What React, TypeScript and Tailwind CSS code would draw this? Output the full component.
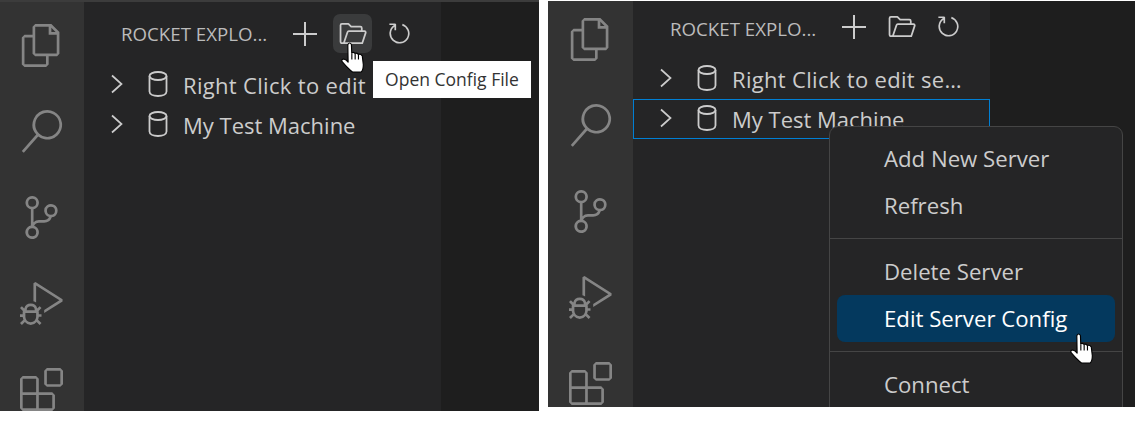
import React from 'react';

const BarIcon = ({ d }: { d: string }) => (
  <svg className="shrink-0" width="43" height="43" viewBox="0 0 24 24" fill="#858585" fillRule="evenodd">
    <path d={d} />
  </svg>
);

const FILES = 'M17.5 0h-9L7 1.5V6H2.5L1 7.5v15.07L2.5 24h12.07L16 22.57V18h4.7l1.3-1.43V4.5L17.5 0zm0 2.12l2.38 2.38H17.5V2.12zm-3 20.38h-12v-15H7v9.07L8.5 18h6v4.5zm6-6h-12v-15H16V6h4.5v10.5z';
const SEARCH = 'M15.25 0a8.25 8.25 0 0 0-6.18 13.72L1 22.88l1.12 1 8.05-9.12A8.251 8.251 0 1 0 15.25.01V0zm0 15a6.75 6.75 0 1 1 0-13.5 6.75 6.75 0 0 1 0 13.5z';
const BRANCH = 'M21.007 8.222A3.738 3.738 0 0 0 15.045 5.2a3.737 3.737 0 0 0 1.156 6.583 2.988 2.988 0 0 1-2.668 1.67h-2.99a4.456 4.456 0 0 0-2.989 1.165V7.4a3.737 3.737 0 1 0-1.494 0v9.117a3.776 3.776 0 1 0 1.816.099 2.99 2.99 0 0 1 2.668-1.667h2.99a4.484 4.484 0 0 0 4.223-3.039 3.736 3.736 0 0 0 3.25-3.687zM4.565 3.738a2.242 2.242 0 1 1 4.484 0 2.242 2.242 0 0 1-4.484 0zm4.484 16.441a2.242 2.242 0 1 1-4.484 0 2.242 2.242 0 0 1 4.484 0zm8.221-9.715a2.242 2.242 0 1 1 0-4.485 2.242 2.242 0 0 1 0 4.485z';
const DEBUG = 'M10.94 13.5l-1.32 1.32a3.73 3.73 0 0 0-7.24 0L1.06 13.5 0 14.56l1.72 1.72-.22.22V18H0v1.5h1.5v.08c.077.489.214.966.41 1.42L0 22.94 1.06 24l1.65-1.65A4.308 4.308 0 0 0 6 24a4.31 4.31 0 0 0 3.29-1.65L10.94 24 12 22.94 10.09 21c.198-.464.336-.951.41-1.45v-.1H12V18h-1.5v-1.5l-.22-.22L12 14.56l-1.06-1.06zM6 13.5a2.25 2.25 0 0 1 2.25 2.25h-4.5A2.25 2.25 0 0 1 6 13.5zm3 6a3.33 3.33 0 0 1-3 3 3.33 3.33 0 0 1-3-3v-2.25h6v2.25zm14.76-9.9v1.26L13.5 17.37V15.6l8.5-5.37L9 2v9.46a5.07 5.07 0 0 0-1.5-.72V.63L8.64 0l15.12 9.6z';
const EXTENSIONS = 'M13.5 1.5L15 0h7.5L24 1.5V9l-1.5 1.5H15L13.5 9V1.5zm1.5 0V9h7.5V1.5H15zM0 15V6l1.5-1.5H9L10.5 6v7.5H18l1.5 1.5v7.5L18 24H1.5L0 22.5V15zm9-1.5V6H1.5v7.5H9zM9 15H1.5v7.5H9V15zm1.5 7.5H18V15h-7.5v7.5z';

const Chevron = () => (
  <svg className="mb-[2px] shrink-0" width="14" height="20" viewBox="0 0 14 20" fill="none" stroke="#cccccc" strokeWidth="1.7">
    <path d="M2 1.500l9.500 8.500L2 18.500" />
  </svg>
);

const DbIcon = () => (
  <svg className="mb-[3px] ml-[23px] shrink-0" width="22" height="28" viewBox="0 0 22 28" fill="none" stroke="#cccccc" strokeWidth="1.800">
    <ellipse cx="11" cy="6" rx="8.500" ry="4" />
    <path d="M2.500 6v15.500c0 2.600 3.500 4.500 8.500 4.500s8.500-1.900 8.500-4.500V6" />
  </svg>
);

const PlusIcon = () => (
  <svg width="28" height="28" viewBox="0 0 28 28" fill="none" stroke="#cccccc" strokeWidth="2">
    <path d="M14 2v24M2 14h24" />
  </svg>
);

const FolderIcon = () => (
  <svg width="28" height="24" viewBox="0 0 30 26" fill="none" stroke="#cccccc" strokeWidth="1.900" strokeLinejoin="round">
    <path d="M5 23H3a1.500 1.500 0 0 1-1.500-1.500v-18A1.500 1.500 0 0 1 3 2h7l3 3h10a1.500 1.500 0 0 1 1.500 1.500V10" />
    <path d="M5 23l4-12a1.500 1.500 0 0 1 1.500-1h17c1 0 1.500 .8 1.200 1.800L25 23z" />
  </svg>
);

const RefreshIcon = () => (
  <svg width="27" height="27" viewBox="0 0 16 16" fill="#cccccc" fillRule="evenodd">
    <path d="M4.681 3H2V2h3.500l.5.5V6H5V4a5 5 0 1 0 4.530-.761l.302-.954A6 6 0 1 1 4.681 3z" />
  </svg>
);

const HandCursor = () => (
  <svg width="25" height="31" viewBox="0 0 24 30" fill="#ffffff" stroke="#000000" strokeWidth="1.100" strokeLinejoin="round">
    <path d="M6.500 2.500Q8.300-.5 10 2.500L10.300 10.500Q12 9.500 13.400 11Q15.300 10.300 16.600 12Q19 11.500 20.500 13.500L21.500 22Q21.500 27 19.500 29L11 29Q7 26 1 19Q0 16.500 2.500 16.500Q5 17 6.800 19.500Z" />
    <path d="M10.400 11V17M13.600 11.500V17M16.800 12.500V17" fill="none" />
  </svg>
);

const TreeRow = ({ label, selected, wide }: { label: string; selected?: boolean; wide?: boolean }) => (
  <div className={`flex h-[40px] items-center pl-[26px] pr-[25px] ${selected ? 'outline outline-1 -outline-offset-1 outline-[#007fd4]' : ''}`}>
    <Chevron />
    <DbIcon />
    <span className={`ml-[14px] truncate text-[22px] leading-[38px] text-[#cccccc] ${wide ? 'tracking-[0.32px]' : ''}`}>{label}</span>
  </div>
);

const SideBar = ({ first, hoverFolder, selected, header, titlePad, rows }: {
  first: string;
  hoverFolder?: boolean;
  selected?: boolean;
  header: string;
  titlePad: string;
  rows: string;
}) => (
  <div className="w-[357px] shrink-0 bg-[#252526]">
    <div className={`flex h-[39px] items-center pl-[37px] ${header}`}>
      <span className={`w-[170px] shrink-0 text-[18.700px] text-[#bbbbbb] ${titlePad}`}>ROCKET EXPLO...</span>
      <PlusIcon />
      <div className={`ml-[14px] flex h-[39px] w-[39px] items-center justify-center rounded-[7px] ${hoverFolder ? 'bg-[#3a3b3c]' : ''}`}>
        <FolderIcon />
      </div>
      <div className="ml-[14px]">
        <RefreshIcon />
      </div>
    </div>
    <div className={rows}>
      <TreeRow label={first} wide />
      <TreeRow label="My Test Machine" selected={selected} />
    </div>
  </div>
);

const ActivityBar = ({ className }: { className: string }) => (
  <div className={`flex shrink-0 flex-col gap-[43px] bg-[#333333] ${className}`}>
    <BarIcon d={FILES} />
    <BarIcon d={SEARCH} />
    <BarIcon d={BRANCH} />
    <BarIcon d={DEBUG} />
    <BarIcon d={EXTENSIONS} />
  </div>
);

const MenuItem = ({ label, active }: { label: string; active?: boolean }) => (
  <div className={`flex h-[47px] items-center rounded-[8px] pl-[47px] text-[22.200px] ${active ? 'bg-[#04395e] text-white' : 'text-[#cccccc]'}`}>
    {label}
  </div>
);

const MenuSeparator = () => <div className="mx-[-7px] my-[9px] h-px bg-[#454545]" />;

export default function App() {
  return (
    <div className="flex h-[425px] w-[1142px] items-start overflow-hidden bg-white font-['Open_Sans',sans-serif]">
      <div className="relative flex h-[411px] w-[539px] shrink-0 overflow-hidden border-t-[2px] border-[#3c3c3c] bg-[#1e1e1e]">
        <ActivityBar className="w-[84px] pl-[20px] pt-[22px]" />
        <SideBar first="Right Click to edit" hoverFolder header="mt-[12px]" titlePad="pt-[1px]" rows="mt-[12px]" />
        <div className="absolute left-[373px] top-[59px] flex h-[37px] w-[158px] items-center justify-center bg-white text-[17.500px] text-[#333333]">
          Open Config File
        </div>
        <div className="absolute left-[341px] top-[40px]">
          <HandCursor />
        </div>
      </div>

      <div className="relative ml-[9px] mt-[1px] flex h-[406px] w-[587px] shrink-0 overflow-hidden bg-[#1e1e1e]">
        <ActivityBar className="w-[85px] pl-[21px] pt-[17px]" />
        <SideBar first="Right Click to edit servers" selected header="mt-[6px]" titlePad="pt-[5px]" rows="mt-[13px]" />
        <div className="absolute left-[281px] top-[125px] w-[294px] rounded-t-[9px] border border-[#454545] bg-[#252526] px-[7px] pt-[8px]">
          <MenuItem label="Add New Server" />
          <MenuItem label="Refresh" />
          <MenuSeparator />
          <MenuItem label="Delete Server" />
          <MenuItem label="Edit Server Config" active />
          <MenuSeparator />
          <MenuItem label="Connect" />
        </div>
        <div className="absolute left-[522px] top-[332px]">
          <HandCursor />
        </div>
      </div>
    </div>
  );
}
